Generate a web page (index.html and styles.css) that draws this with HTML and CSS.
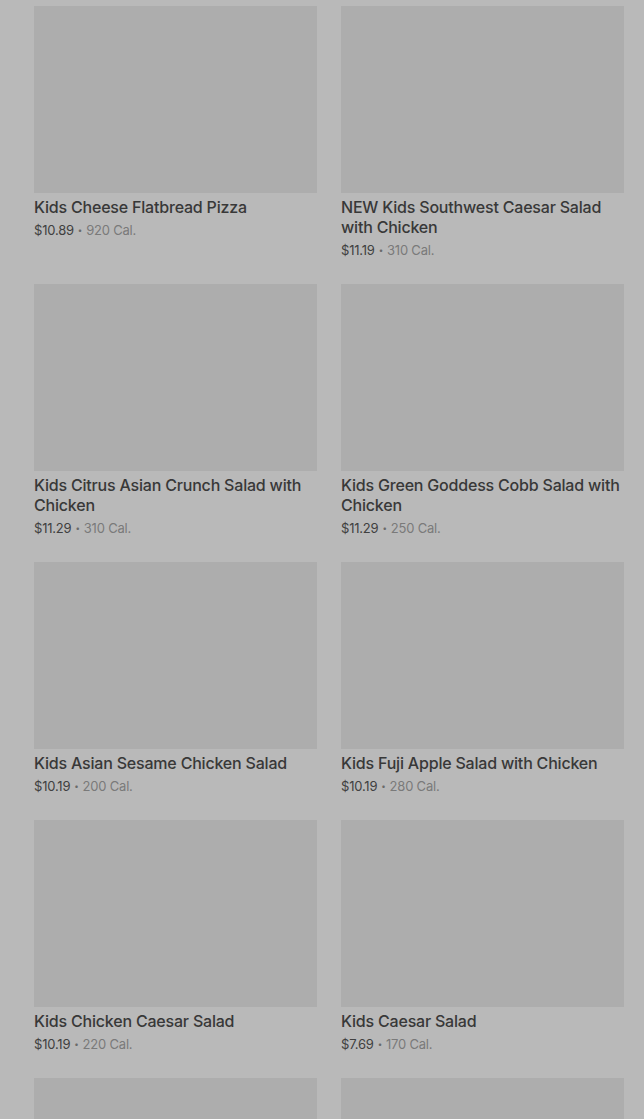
FILE: index.html
```html
<html>
    <head>
        <title>Kids Menu</title>
        <link rel="stylesheet" href="styles.css">
    </head>
    <body>
        <div class="top-strip"></div>
        <div class="menu-grid">
            <div class="item">
                <div class="photo"></div>
                <div class="name">Kids Cheese Flatbread Pizza</div>
                <div class="meta"><span class="price">$10.89</span><span class="dot">&bull;</span><span class="cal">920 Cal.</span></div>
            </div>
            <div class="item">
                <div class="photo"></div>
                <div class="name">NEW Kids Southwest Caesar Salad with Chicken</div>
                <div class="meta"><span class="price">$11.19</span><span class="dot">&bull;</span><span class="cal">310 Cal.</span></div>
            </div>
            <div class="item">
                <div class="photo"></div>
                <div class="name">Kids Citrus Asian Crunch Salad with Chicken</div>
                <div class="meta"><span class="price">$11.29</span><span class="dot">&bull;</span><span class="cal">310 Cal.</span></div>
            </div>
            <div class="item">
                <div class="photo"></div>
                <div class="name">Kids Green Goddess Cobb Salad with Chicken</div>
                <div class="meta"><span class="price">$11.29</span><span class="dot">&bull;</span><span class="cal">250 Cal.</span></div>
            </div>
            <div class="item">
                <div class="photo"></div>
                <div class="name">Kids Asian Sesame Chicken Salad</div>
                <div class="meta"><span class="price">$10.19</span><span class="dot">&bull;</span><span class="cal">200 Cal.</span></div>
            </div>
            <div class="item">
                <div class="photo"></div>
                <div class="name">Kids Fuji Apple Salad with Chicken</div>
                <div class="meta"><span class="price">$10.19</span><span class="dot">&bull;</span><span class="cal">280 Cal.</span></div>
            </div>
            <div class="item">
                <div class="photo"></div>
                <div class="name">Kids Chicken Caesar Salad</div>
                <div class="meta"><span class="price">$10.19</span><span class="dot">&bull;</span><span class="cal">220 Cal.</span></div>
            </div>
            <div class="item">
                <div class="photo"></div>
                <div class="name">Kids Caesar Salad</div>
                <div class="meta"><span class="price">$7.69</span><span class="dot">&bull;</span><span class="cal">170 Cal.</span></div>
            </div>
            <div class="item">
                <div class="photo"></div>
            </div>
            <div class="item">
                <div class="photo"></div>
            </div>
        </div>
    </body>
</html>
```

FILE: styles.css
```css
body {
    margin: 0;
    background-color: #b9b9b9;
    font-family: Inter, "Liberation Sans", sans-serif;
    overflow: hidden;
}
.top-strip {
    height: 6px;
}
.menu-grid {
    display: grid;
    grid-template-columns: 283px 283px;
    column-gap: 24px;
    row-gap: 24px;
    padding-left: 34px;
}
.photo {
    height: 187px;
    background-color: #adadad;
    margin-bottom: 4px;
}
.name {
    color: #383838;
    font-size: 16px;
    font-weight: 500;
    line-height: 20px;
    letter-spacing: -0.2px;
}
.meta {
    margin-top: 3px;
    height: 20px;
    font-size: 13px;
    line-height: 20px;
    letter-spacing: -0.2px;
    overflow: hidden;
}
.price {
    color: #404040;
}
.dot {
    color: #6a6a6a;
    font-size: 8px;
    line-height: 0;
    margin: 0 4px;
    vertical-align: 2px;
}
.cal {
    color: #7a7a7a;
}
```
